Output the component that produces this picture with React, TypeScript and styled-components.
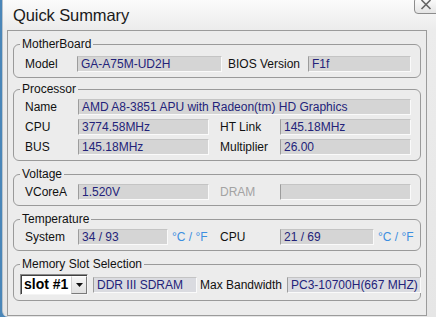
import React from "react"
import styled, { createGlobalStyle } from "styled-components"

const GlobalStyle = createGlobalStyle`
  html, body {
    margin: 0;
    padding: 0;
    background: #4a86b8;
    font-family: "Liberation Sans", Arial, sans-serif;
    font-size: 12px;
    overflow: hidden;
  }
`

export default function App() {
  return (
    <>
      <GlobalStyle />
      <Window>
        <TitleBar>
          <Title>Quick Summary</Title>
          <CloseButton>
            <svg width="12" height="11" viewBox="0 0 12 11">
              <path d="M1.5 1 L10.5 10 M10.5 1 L1.5 10" stroke="#666" strokeWidth="1.6" fill="none" />
            </svg>
          </CloseButton>
        </TitleBar>

        <Panel>
          <Group $top={0} $pt={5}>
            <Legend>MotherBoard</Legend>
            <Row $inset={5}>
              <Label $width={52}>Model</Label>
              <Field $width={145}>GA-A75M-UD2H</Field>
              <Label $width={80} $gap={6}>BIOS Version</Label>
              <Field $width={103}>F1f</Field>
            </Row>
          </Group>

          <Group $top={4}>
            <Legend>Processor</Legend>
            <Rows>
              <Row $inset={5}>
                <Label $width={53}>Name</Label>
                <Field $width={333}>AMD A8-3851 APU with Radeon(tm) HD Graphics</Field>
              </Row>
              <Row $inset={5}>
                <Label $width={53}>CPU</Label>
                <Field $width={131}>3774.58MHz</Field>
                <Label $width={60} $gap={11}>HT Link</Label>
                <Field $width={131}>145.18MHz</Field>
              </Row>
              <Row $inset={5}>
                <Label $width={53}>BUS</Label>
                <Field $width={131}>145.18MHz</Field>
                <Label $width={60} $gap={11}>Multiplier</Label>
                <Field $width={131}>26.00</Field>
              </Row>
            </Rows>
          </Group>

          <Group $top={6}>
            <Legend>Voltage</Legend>
            <Row $inset={5}>
              <Label $width={53}>VCoreA</Label>
              <Field $width={131}>1.520V</Field>
              <Label $width={60} $gap={11} $disabled>DRAM</Label>
              <Field $width={131}></Field>
            </Row>
          </Group>

          <Group $top={6}>
            <Legend>Temperature</Legend>
            <Row $inset={5}>
              <Label $width={53}>System</Label>
              <Field $width={90}>34 / 93</Field>
              <Unit $width={52}>°C / °F</Unit>
              <Label $width={60}>CPU</Label>
              <Field $width={94}>21 / 69</Field>
              <Unit $width={37}>°C / °F</Unit>
            </Row>
          </Group>

          <Group $top={6}>
            <Legend>Memory Slot Selection</Legend>
            <Row $inset={0} $height={21}>
              <Select>
                <SelectValue>slot #1</SelectValue>
                <SelectArrow>
                  <svg width="7" height="4" viewBox="0 0 7 4">
                    <path d="M0 0 H7 L3.5 4 Z" fill="#111" />
                  </svg>
                </SelectArrow>
              </Select>
              <Field $width={104} $gap={5} $tint>DDR III SDRAM</Field>
              <Label $width={87} $gap={3}>Max Bandwidth</Label>
              <Field $width={134} $tint>PC3-10700H(667 MHZ)</Field>
            </Row>
          </Group>
        </Panel>
      </Window>
    </>
  )
}

const Window = styled.div`
  position: relative;
  margin-left: 2px;
  width: 434px;
  height: 317px;
  box-sizing: border-box;
  border-left: 1px solid #b9c3cc;
  border-bottom-left-radius: 6px;
  background: linear-gradient(#fbfbfb 0px, #ececec 30px, #e6e6e6 100%);
  display: flex;
  flex-direction: column;
`

const TitleBar = styled.div`
  height: 30px;
  display: flex;
  align-items: center;
  padding-left: 10px;
  box-sizing: border-box;
`

const Title = styled.div`
  font-size: 16.5px;
  color: #1a1a1a;
  letter-spacing: -0.1px;
`

const CloseButton = styled.div`
  position: absolute;
  top: -3px;
  right: -4px;
  width: 26px;
  height: 17px;
  box-sizing: border-box;
  border: 1px solid #8c8c8c;
  border-radius: 4px;
  background: linear-gradient(#fdfdfd, #e4e4e4);
  display: flex;
  align-items: flex-end;
  justify-content: center;
  padding: 0 2px 3px 0;
`

const Panel = styled.div`
  margin-left: 4px;
  width: 420px;
  height: 286px;
  box-sizing: border-box;
  border: 1px solid #9b9b9b;
  background: #ececec;
  padding: 6px 5px 0 5px;
  display: flex;
  flex-direction: column;
`

const Group = styled.fieldset<{ $top: number; $pt?: number }>`
  margin: ${(p) => p.$top}px 0 0 0;
  padding: ${(p) => p.$pt ?? 3}px 3px 5px 6px;
  border: 1px solid #9a9a9a;
  border-radius: 6px;
  min-width: 0;
`

const Legend = styled.legend`
  padding: 0 2px;
  font-size: 12px;
  line-height: 14px;
  color: #111;
`

const Rows = styled.div`
  display: flex;
  flex-direction: column;
  gap: 4px;
`

const Row = styled.div<{ $inset: number; $height?: number }>`
  display: flex;
  align-items: center;
  height: ${(p) => p.$height ?? 16}px;
  margin-left: ${(p) => p.$inset}px;
`

const Label = styled.div<{ $width: number; $gap?: number; $disabled?: boolean }>`
  width: ${(p) => p.$width}px;
  margin-left: ${(p) => p.$gap ?? 0}px;
  flex: none;
  color: ${(p) => (p.$disabled ? "#a3a3a3" : "#111")};
  white-space: nowrap;
`

const Field = styled.div<{ $width: number; $gap?: number; $tint?: boolean }>`
  width: ${(p) => p.$width}px;
  height: 16px;
  margin-left: ${(p) => p.$gap ?? 0}px;
  flex: none;
  box-sizing: border-box;
  padding-left: 3px;
  line-height: 15px;
  background: ${(p) => (p.$tint ? "#dadbe0" : "#d5d5d5")};
  border-left: 1px solid #9c9c9c;
  border-top: 1px solid #c4c4c4;
  border-right: 1px solid #fafafa;
  border-bottom: 1px solid #fafafa;
  color: #23237a;
  white-space: nowrap;
  overflow: hidden;
`

const Unit = styled.div<{ $width: number }>`
  width: ${(p) => p.$width}px;
  flex: none;
  box-sizing: border-box;
  padding-left: 4px;
  color: #3c8fe0;
  white-space: nowrap;
`

const Select = styled.div`
  width: 68px;
  height: 21px;
  flex: none;
  box-sizing: border-box;
  display: flex;
  background: #fff;
  border-top: 1px solid #8a8a8a;
  border-left: 1px solid #8a8a8a;
  border-right: 1px solid #f4f4f4;
  border-bottom: 1px solid #f4f4f4;
  box-shadow: inset 1px 1px 0 #404040;
`

const SelectValue = styled.div`
  flex: 1;
  min-width: 0;
  padding-left: 3px;
  font-size: 14px;
  font-weight: bold;
  line-height: 19px;
  color: #000;
  white-space: nowrap;
  overflow: hidden;
`

const SelectArrow = styled.div`
  width: 16px;
  flex: none;
  margin: 1px 0 0 0;
  box-sizing: border-box;
  background: linear-gradient(#f6f6f6, #e0e0e0);
  border-left: 1px solid #cfcfcf;
  border-top: 1px solid #fff;
  border-right: 1px solid #7a7a7a;
  border-bottom: 1px solid #7a7a7a;
  display: flex;
  align-items: center;
  justify-content: center;
`
